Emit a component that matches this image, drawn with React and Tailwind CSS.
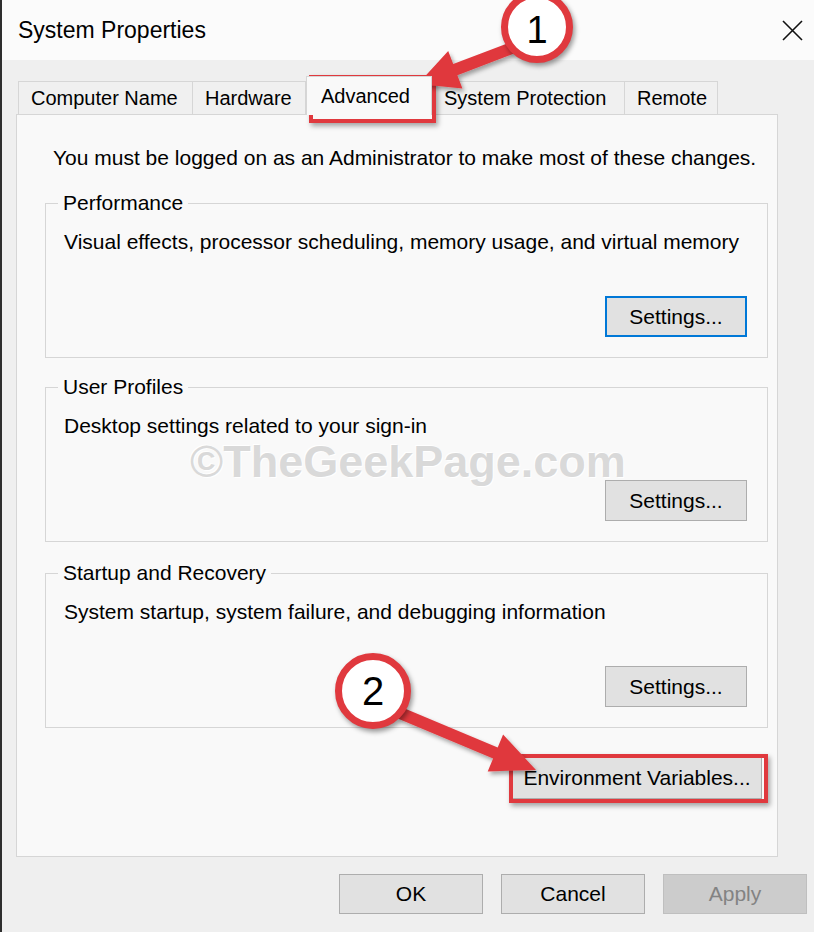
import React from 'react'

const RED = '#e0393e'

function SettingsButton({ focused, label = 'Settings...' }) {
  return (
    <button
      className={
        focused
          ? 'w-[142px] h-[41px] bg-[#e1e1e1] border-2 border-[#0078d7] text-[21px] text-black'
          : 'w-[142px] h-[41px] bg-[#e1e1e1] border border-[#adadad] text-[21px] text-black'
      }
    >
      {label}
    </button>
  )
}

function Group({ title, text, focused, className }) {
  return (
    <fieldset className={'w-[723px] border border-[#d6d6d6] pl-[18px] pr-[20px] pb-[20px] ' + className}>
      <legend className="px-[5px] -ml-[6px] text-[21px] leading-[24px]">{title}</legend>
      <div className="text-[21px] leading-[24px] mt-[15px]">{text}</div>
      <div className="flex justify-end mt-[42px]">
        <SettingsButton focused={focused} />
      </div>
    </fieldset>
  )
}

function Tab({ label, active, w }) {
  if (active) {
    return (
      <div className={'h-[39px] -mb-px z-10 bg-[#f9f9f9] border border-b-0 border-[#d6d6d6] flex items-center pl-[14px] text-[20px] ' + w}>
        {label}
      </div>
    )
  }
  return (
    <div className={'h-[33px] bg-[#f0f0f0] border border-b-0 border-l-0 first:border-l border-[#d6d6d6] flex items-center pl-[12px] text-[20px] ' + w}>
      {label}
    </div>
  )
}

export default function App() {
  return (
    <div className="w-[814px] h-[932px] relative overflow-hidden bg-[#efefef] border-l-2 border-[#2e2e2e] font-['Liberation_Sans',Arial,sans-serif] text-black">
      {/* title bar */}
      <div className="h-[60px] bg-[#fbfbfb] flex items-center justify-between pl-[16px] pr-[11px]">
        <span className="text-[23px]">System Properties</span>
        <svg width="21" height="21" viewBox="0 0 21 21">
          <path d="M1 1 L20 20 M20 1 L1 20" stroke="#111" strokeWidth="1.6" fill="none" />
        </svg>
      </div>

      {/* tabs */}
      <div className="h-[54px] flex items-end pl-[16px]">
        <Tab label="Computer Name" w="w-[175px]" />
        <Tab label="Hardware" w="w-[113px]" />
        <Tab label="Advanced" w="w-[126px]" active />
        <Tab label="System Protection" w="w-[193px]" />
        <Tab label="Remote" w="w-[93px]" />
      </div>

      {/* panel */}
      <div className="ml-[14px] w-[762px] h-[743px] bg-[#f9f9f9] border border-[#d6d6d6] pl-[28px] pt-[31px]">
        <div className="ml-[8px] text-[21px] leading-[24px]">
          You must be logged on as an Administrator to make most of these changes.
        </div>
        <Group
          className="mt-[21px]"
          title="Performance"
          text="Visual effects, processor scheduling, memory usage, and virtual memory"
          focused
        />
        <Group className="mt-[17px]" title="User Profiles" text="Desktop settings related to your sign-in" />
        <Group
          className="mt-[19px]"
          title="Startup and Recovery"
          text="System startup, system failure, and debugging information"
        />
        <div className="w-[723px] flex justify-end pr-[6px] mt-[29px]">
          <button className="w-[250px] h-[42px] bg-[#e1e1e1] border border-[#adadad] text-[21px]">
            Environment Variables...
          </button>
        </div>
      </div>

      {/* footer buttons */}
      <div className="flex justify-end gap-[18px] pr-[7px] mt-[17px]">
        <button className="w-[144px] h-[40px] bg-[#e1e1e1] border border-[#adadad] text-[21px]">OK</button>
        <button className="w-[144px] h-[40px] bg-[#e1e1e1] border border-[#adadad] text-[21px]">Cancel</button>
        <button className="w-[144px] h-[40px] bg-[#cccccc] border border-[#bfbfbf] text-[21px] text-[#838383]">Apply</button>
      </div>

      {/* watermark */}
      <div className="absolute left-[188px] top-[428px] text-[45px] font-bold text-[#d9d9d9] pointer-events-none [text-shadow:1px_1px_0_#ffffff,-1px_-1px_0_#ffffff]">
        ©TheGeekPage.com
      </div>

      {/* highlight boxes */}
      <div className="absolute left-[307px] top-[75px] w-[127px] h-[48px] border-4 border-[#e0393e] shadow-[2px_3px_5px_rgba(0,0,0,0.35)]" />
      <div className="absolute left-[507px] top-[754px] w-[259px] h-[49px] border-4 border-[#e0393e] shadow-[2px_3px_5px_rgba(0,0,0,0.35)]" />

      {/* arrows */}
      <svg className="absolute inset-0 pointer-events-none" width="814" height="932" viewBox="0 0 814 932">
        <defs>
          <filter id="sh" x="-20%" y="-20%" width="140%" height="140%">
            <feDropShadow dx="2" dy="3" stdDeviation="2" floodColor="#000" floodOpacity="0.35" />
          </filter>
        </defs>
        <polygon
          filter="url(#sh)"
          fill={RED}
          points="507.9,42.4 451.2,64.1 446.2,51 416,84 460.4,88.4 455.4,75.3 512.1,53.6"
        />
        <polygon
          filter="url(#sh)"
          fill={RED}
          points="400.3,707.5 495.7,747.5 501.1,734.6 534,770 485.7,771.4 491.1,758.5 395.7,718.5"
        />
      </svg>

      {/* numbered callouts */}
      <div className="absolute left-[499px] top-[-9px] w-[72px] h-[72px] rounded-full bg-white border-[7px] border-[#e0393e] shadow-[2px_3px_5px_rgba(0,0,0,0.4)] flex items-center justify-center text-[38px] leading-none pt-[6px]">
        1
      </div>
      <div className="absolute left-[333px] top-[653px] w-[76px] h-[76px] rounded-full bg-white border-[7px] border-[#e0393e] shadow-[2px_3px_5px_rgba(0,0,0,0.4)] flex items-center justify-center text-[40px] leading-none">
        2
      </div>
    </div>
  )
}
